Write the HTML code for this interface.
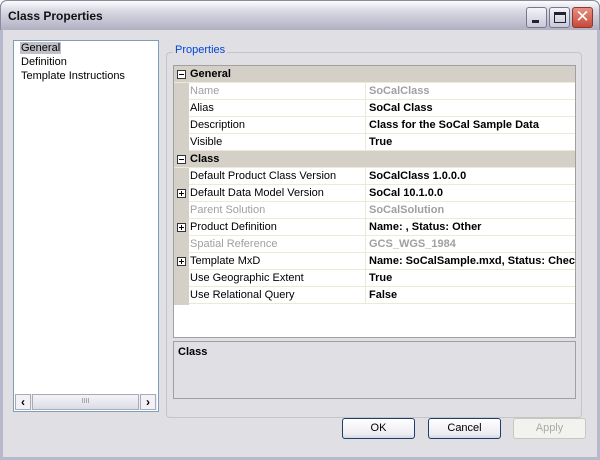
<!DOCTYPE html><html><head><style>
*{box-sizing:border-box;margin:0;padding:0}
body{width:600px;height:460px;overflow:hidden;font-family:"Liberation Sans",sans-serif;font-size:11px;background:#fff}
.win{position:absolute;left:0;top:0;width:600px;height:460px;background:#e0dfe3;border:1px solid #6e6e80;border-top:none;border-radius:7px 7px 0 0}
.title{position:absolute;left:0;top:0;width:600px;height:30px;border-radius:7px 7px 0 0;background:linear-gradient(#fdfdfe,#dcdce6 30%,#c2c2d2 70%,#b0b0c2);border:1px solid #8a8a9c;border-bottom:none}
.title span{position:absolute;left:7px;top:8px;font-weight:bold;font-size:12px;color:#111}
.tb{position:absolute;top:7px;width:21px;height:21px;border:1px solid #77778f;border-radius:3px;background:linear-gradient(#f4f4f8,#c8c8d8)}
.frame{position:absolute;left:0;top:30px;width:600px;height:430px;border:3px solid #b8b8cc;border-top:none}
.list{position:absolute;left:13px;top:40px;width:146px;height:372px;background:#fff;border:1px solid #7f9db9}
.list div{position:absolute;left:7px;font-size:11px}
.gb{position:absolute;left:166px;top:52px;width:416px;height:366px;border:1px solid #c5c4c8;border-radius:4px}
.gbl{position:absolute;left:173px;top:44px;background:#e0dfe3;color:#0046d5;padding:0 2px}
.grid{position:absolute;left:173px;top:65px;width:403px;height:273px;background:#fff;border:1px solid #a0a0a0;overflow:hidden}
.row{position:absolute;left:0;width:403px;height:17px;border-bottom:1px solid #ece9d8}
.row .n{position:absolute;left:16px;top:2px}
.row .v{position:absolute;left:192px;top:2px;font-weight:bold;white-space:nowrap}
.row .sep{position:absolute;left:191px;top:0;width:1px;height:17px;background:#ece9d8}
.marg{position:absolute;left:0;top:0;width:15px;height:239px;background:#d4d0c8}
.hdr{background:#d4d0c8}
.hdr .h{position:absolute;left:16px;top:2px;font-weight:bold}
.box{position:absolute;left:3px;top:4px;width:9px;height:9px;border:1px solid #333;background:#fff}
.box:before{content:"";position:absolute;left:1px;top:3px;width:5px;height:1px;background:#000}
.plus:after{content:"";position:absolute;left:3px;top:1px;width:1px;height:5px;background:#000}
.g{color:#a0a0a0}
.desc{position:absolute;left:173px;top:341px;width:403px;height:58px;border:1px solid #a0a0a0;background:#e0dfe3}
.desc span{position:absolute;left:4px;top:4px;font-weight:bold}
.btn{position:absolute;top:418px;width:73px;height:21px;border:1px solid #1f3e6e;border-radius:3px;background:linear-gradient(#fff,#ececf2 80%,#d6d6e0);text-align:center;line-height:19px}
</style></head><body>
<div class="win"></div>
<div class="frame"></div>
<div class="title"><span>Class Properties</span></div>
<div class="tb" style="left:526px"><div style="position:absolute;left:5px;top:12px;width:7px;height:3px;background:#223"></div></div>
<div class="tb" style="left:549px"><div style="position:absolute;left:4px;top:4px;width:12px;height:11px;border:1px solid #223;border-top:3px solid #223"></div></div>
<div class="tb" style="left:572px;background:linear-gradient(#e89080,#c84838);border-color:#8a3a30;color:#fff;font-size:17px;text-align:center;line-height:18px;font-family:'DejaVu Sans'">✕</div>
<div class="list">
<div style="top:1px;left:6px;background:#c0c0c8;padding:0 1px">General</div>
<div style="top:15px">Definition</div>
<div style="top:29px">Template Instructions</div>
<div style="position:absolute;left:1px;top:353px;width:142px;height:16px;background:#eeedf2">
<div style="position:absolute;left:0;top:0;width:16px;height:16px;border:1px solid #aab;background:#f2f2f6;font-size:12px;text-align:center;font-weight:bold;line-height:14px">‹</div>
<div style="position:absolute;left:17px;top:0;width:107px;height:16px;border:1px solid #aab;background:linear-gradient(#f4f4f8,#dcdce6);font-size:7px;text-align:center;line-height:14px;color:#888">IIII</div>
<div style="position:absolute;left:125px;top:0;width:16px;height:16px;border:1px solid #aab;background:#f2f2f6;font-size:12px;text-align:center;font-weight:bold;line-height:14px">›</div>
</div>
</div>
<div class="gb"></div>
<div class="gbl">Properties</div>
<div class="grid">
<div class="marg"></div>
<div class="row hdr" style="top:0"><div class="box"></div><span class="h">General</span></div>
<div class="row" style="top:17px;left:15px;width:388px"><span class="n g" style="left:1px">Name</span><div class="sep" style="left:176px"></div><span class="v g" style="left:180px">SoCalClass</span></div>
<div class="row" style="top:34px;left:15px"><span class="n" style="left:1px">Alias</span><div class="sep" style="left:176px"></div><span class="v" style="left:180px">SoCal Class</span></div>
<div class="row" style="top:51px;left:15px"><span class="n" style="left:1px">Description</span><div class="sep" style="left:176px"></div><span class="v" style="left:180px">Class for the SoCal Sample Data</span></div>
<div class="row" style="top:68px;left:15px"><span class="n" style="left:1px">Visible</span><div class="sep" style="left:176px"></div><span class="v" style="left:180px">True</span></div>
<div class="row hdr" style="top:85px"><div class="box"></div><span class="h">Class</span></div>
<div class="row" style="top:102px;left:15px"><span class="n" style="left:1px">Default Product Class Version</span><div class="sep" style="left:176px"></div><span class="v" style="left:180px">SoCalClass 1.0.0.0</span></div>
<div class="row" style="top:119px;left:15px"><span class="n" style="left:1px">Default Data Model Version</span><div class="sep" style="left:176px"></div><span class="v" style="left:180px">SoCal 10.1.0.0</span></div>
<div class="row" style="top:136px;left:15px"><span class="n g" style="left:1px">Parent Solution</span><div class="sep" style="left:176px"></div><span class="v g" style="left:180px">SoCalSolution</span></div>
<div class="row" style="top:153px;left:15px"><span class="n" style="left:1px">Product Definition</span><div class="sep" style="left:176px"></div><span class="v" style="left:180px">Name: , Status: Other</span></div>
<div class="row" style="top:170px;left:15px"><span class="n g" style="left:1px">Spatial Reference</span><div class="sep" style="left:176px"></div><span class="v g" style="left:180px">GCS_WGS_1984</span></div>
<div class="row" style="top:187px;left:15px"><span class="n" style="left:1px">Template MxD</span><div class="sep" style="left:176px"></div><span class="v" style="left:180px">Name: SoCalSample.mxd, Status: Checked</span></div>
<div class="row" style="top:204px;left:15px"><span class="n" style="left:1px">Use Geographic Extent</span><div class="sep" style="left:176px"></div><span class="v" style="left:180px">True</span></div>
<div class="row" style="top:221px;left:15px"><span class="n" style="left:1px">Use Relational Query</span><div class="sep" style="left:176px"></div><span class="v" style="left:180px">False</span></div>
<div class="box plus" style="top:123px"></div>
<div class="box plus" style="top:157px"></div>
<div class="box plus" style="top:191px"></div>
</div>
<div class="desc"><span>Class</span></div>
<div class="btn" style="left:342px">OK</div>
<div class="btn" style="left:428px">Cancel</div>
<div class="btn" style="left:513px;border-color:#c8c8c0;background:#f2f2ee;color:#aaa">Apply</div>
</body></html>
